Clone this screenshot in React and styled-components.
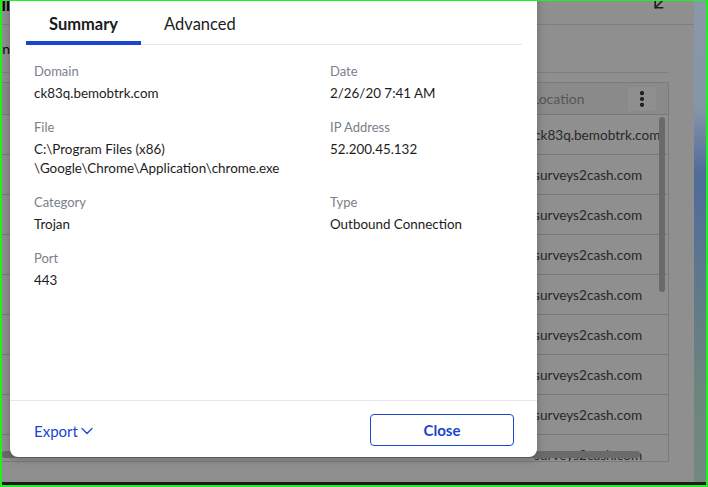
import React from "react";
import styled, { createGlobalStyle } from "styled-components";
import { ArrowDownLeft, ChevronDown, EllipsisVertical } from "lucide-react";

const GlobalStyle = createGlobalStyle`
  html, body {
    margin: 0;
    padding: 0;
    background: #ffffff;
  }
  * {
    box-sizing: border-box;
  }
`;

const BLUE = "#1a46cf";

const Frame = styled.div`
  position: relative;
  width: 708px;
  height: 487px;
  border: 2px solid #1ff01f;
  border-top-width: 1px;
  overflow: hidden;
  display: flex;
  flex-direction: column;
  font-family: Lato, "Liberation Sans", sans-serif;
`;

const Screen = styled.div`
  flex: 1;
  display: flex;
  min-height: 0;
`;

const Taskbar = styled.div`
  height: 3px;
  background: #1b1b1b;
`;

const Desktop = styled.div`
  flex: 1;
  background: linear-gradient(
    180deg,
    #8a97a9 0%,
    #8795a9 22%,
    #4e6b9b 36%,
    #5a7590 52%,
    #6c837f 78%,
    #74887f 100%
  );
`;

const AppWindow = styled.div`
  position: relative;
  width: 692px;
  background: #ffffff;
  display: flex;
  flex-direction: column;
  color: #4a4a4a;
`;

const TopBar = styled.div`
  height: 24px;
  border-bottom: 1px solid #e2e2e2;
  display: flex;
  align-items: flex-start;
  justify-content: space-between;
  padding-right: 26px;
  color: #555;
`;

const ClipStart = styled.div`
  width: 8px;
  overflow: hidden;
  display: flex;
  justify-content: flex-end;
  white-space: nowrap;
  font-size: ${({ $size }) => $size}px;
  font-weight: ${({ $bold }) => ($bold ? 900 : 400)};
  line-height: ${({ $line }) => $line}px;
  color: #111;
`;

const IconSlot = styled.div`
  margin-top: -6px;
  display: flex;
  color: #3a3a3a;
`;

const Toolbar = styled.div`
  height: 48px;
  margin-right: 25px;
  border-bottom: 1px solid #e2e2e2;
  display: flex;
  align-items: center;
`;

const Table = styled.div`
  position: relative;
  margin-top: 9px;
  margin-right: 25px;
  height: 380px;
  border: 1px solid #dcdcdc;
  border-left: none;
  overflow: hidden;
`;

const HeaderRow = styled.div`
  display: grid;
  grid-template-columns: 518px 1fr;
  height: 32px;
  border-bottom: 1px solid #d6d6d6;
  background: #f6f6f6;
  align-items: center;
  font-size: 14px;
  color: #9c9c9c;
`;

const HeaderCell = styled.div`
  display: flex;
  align-items: center;
  justify-content: space-between;
  padding-left: 12px;
  padding-right: 12px;
`;

const MenuButton = styled.div`
  width: 28px;
  height: 24px;
  background: #ffffff;
  display: flex;
  align-items: center;
  justify-content: center;
  color: #2a2a2a;
`;

const Row = styled.div`
  display: grid;
  grid-template-columns: 518px 1fr;
  height: 40px;
  border-bottom: 1px solid #d6d6d6;
  align-items: center;
  font-size: 13.6px;
`;

const Cell = styled.div`
  padding-left: 14px;
  white-space: nowrap;
  overflow: hidden;
`;

const VScroll = styled.div`
  position: absolute;
  right: 3px;
  top: 34px;
  width: 6px;
  height: 175px;
  border-radius: 3px;
  background: #bdbdbd;
`;

const HScroll = styled.div`
  position: absolute;
  left: 0;
  bottom: 3px;
  width: 638px;
  height: 7px;
  border-radius: 3px;
  background: #bdbdbd;
`;

const Dim = styled.div`
  position: absolute;
  inset: 0;
  background: rgba(0, 0, 0, 0.44);
`;

const Modal = styled.div`
  position: absolute;
  left: 8px;
  top: -10px;
  width: 527px;
  height: 466px;
  background: #ffffff;
  border-radius: 8px;
  box-shadow: 0 2px 10px rgba(0, 0, 0, 0.25);
  display: flex;
  flex-direction: column;
`;

const TabBar = styled.div`
  margin: 0 15px 0 16px;
  padding-top: 14px;
  display: flex;
  border-bottom: 1px solid #e6e7ea;
`;

const Tab = styled.div`
  height: 40px;
  padding: 1px 23px 0;
  margin-bottom: -1px;
  display: flex;
  align-items: center;
  font-size: 16.5px;
  font-weight: ${({ $active }) => ($active ? 700 : 400)};
  color: #1b1b1b;
  border-bottom: 4px solid ${({ $active }) => ($active ? BLUE : "transparent")};
`;

const Content = styled.div`
  flex: 1;
  padding: 17px 24px 0 24px;
  display: grid;
  grid-template-columns: 296px 1fr;
  row-gap: 15px;
  align-content: start;
`;

const Field = styled.div`
  display: flex;
  flex-direction: column;
  gap: 4px;
`;

const Label = styled.div`
  font-size: 13px;
  line-height: 18px;
  color: #7b8089;
`;

const Value = styled.div`
  font-size: 13.4px;
  line-height: 19px;
  color: #1c1c1c;
`;

const Footer = styled.div`
  border-top: 1px solid #e6e7ea;
  padding: 13px 23px 11px 24px;
  display: flex;
  align-items: center;
  justify-content: space-between;
`;

const ExportLink = styled.div`
  display: flex;
  align-items: center;
  padding-top: 2px;
  font-size: 15px;
  color: ${BLUE};
  svg {
    margin-left: -1px;
  }
`;

const CloseButton = styled.button`
  width: 144px;
  height: 32px;
  border: 1.5px solid ${BLUE};
  border-radius: 4px;
  background: #ffffff;
  color: ${BLUE};
  font-family: Lato, "Liberation Sans", sans-serif;
  font-size: 15px;
  font-weight: 700;
  cursor: pointer;
`;

const fields = [
  { label: "Domain", value: "ck83q.bemobtrk.com" },
  { label: "Date", value: "2/26/20 7:41 AM" },
  {
    label: "File",
    value: ["C:\\Program Files (x86)", "\\Google\\Chrome\\Application\\chrome.exe"],
  },
  { label: "IP Address", value: "52.200.45.132" },
  { label: "Category", value: "Trojan" },
  { label: "Type", value: "Outbound Connection" },
  { label: "Port", value: "443" },
];

const rows = [
  "ck83q.bemobtrk.com",
  "surveys2cash.com",
  "surveys2cash.com",
  "surveys2cash.com",
  "surveys2cash.com",
  "surveys2cash.com",
  "surveys2cash.com",
  "surveys2cash.com",
  "surveys2cash.com",
];

const App = () => {
  return (
    <>
      <GlobalStyle />
      <Frame>
        <Screen>
          <AppWindow>
            <TopBar>
              <ClipStart $size={16} $bold $line={10}>
                All
              </ClipStart>
              <IconSlot>
                <ArrowDownLeft size={18} strokeWidth={2.2} />
              </IconSlot>
            </TopBar>
            <Toolbar>
              <ClipStart $size={14} $line={18}>
                Screen
              </ClipStart>
            </Toolbar>
            <Table>
              <HeaderRow>
                <div />
                <HeaderCell>
                  Location
                  <MenuButton>
                    <EllipsisVertical size={20} strokeWidth={3} />
                  </MenuButton>
                </HeaderCell>
              </HeaderRow>
              {rows.map((r, i) => (
                <Row key={i}>
                  <div />
                  <Cell>{r}</Cell>
                </Row>
              ))}
              <VScroll />
              <HScroll />
            </Table>
            <Dim />
          </AppWindow>
          <Desktop />
        </Screen>
        <Taskbar />

        <Modal>
          <TabBar>
            <Tab $active>Summary</Tab>
            <Tab>Advanced</Tab>
          </TabBar>
          <Content>
            {fields.map((f) => (
              <Field key={f.label}>
                <Label>{f.label}</Label>
                <Value>
                  {Array.isArray(f.value)
                    ? f.value.map((line) => <div key={line}>{line}</div>)
                    : f.value}
                </Value>
              </Field>
            ))}
          </Content>
          <Footer>
            <ExportLink>
              Export
              <ChevronDown size={20} strokeWidth={1.5} />
            </ExportLink>
            <CloseButton>Close</CloseButton>
          </Footer>
        </Modal>
      </Frame>
    </>
  );
};

export default App;
